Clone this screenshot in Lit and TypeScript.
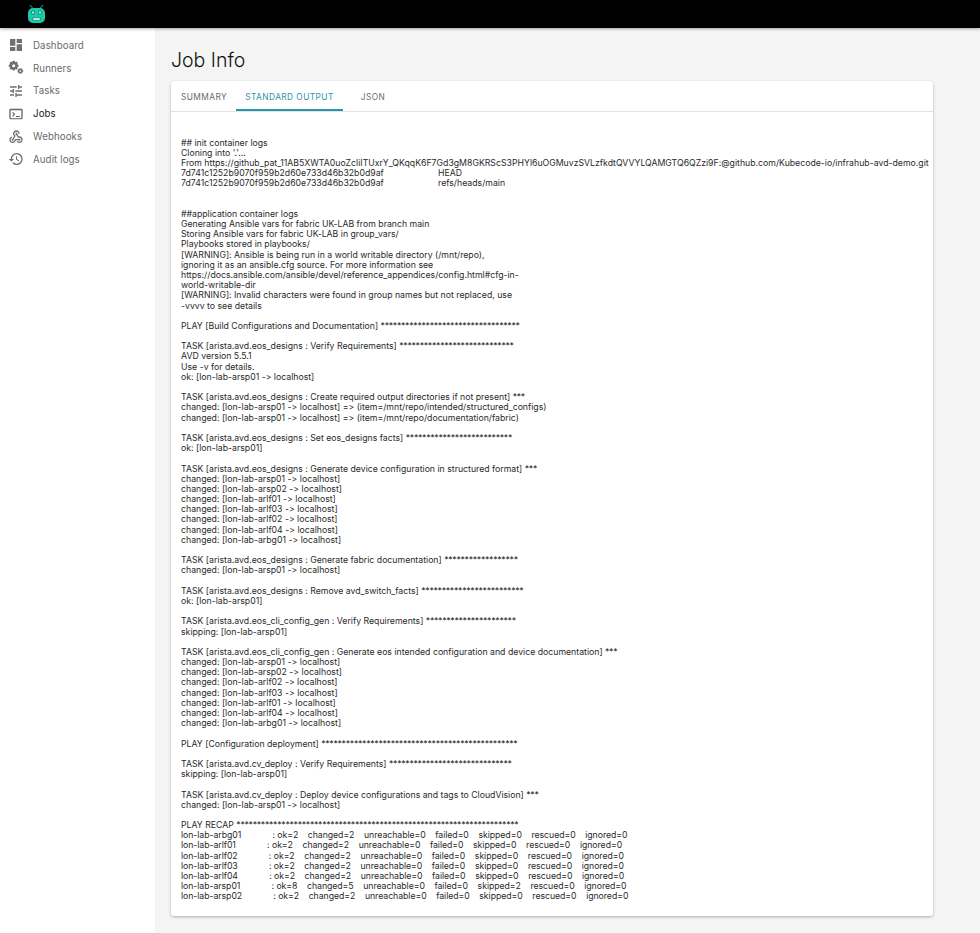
import { LitElement, html, css, svg } from "lit";
import { customElement } from "lit/decorators.js";

const LOG = `## init container logs
Cloning into '.'...
From https://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:@github.com/Kubecode-io/infrahub-avd-demo.git
7d741c1252b9070f959b2d60e733d46b32b0d9af\tHEAD
7d741c1252b9070f959b2d60e733d46b32b0d9af\trefs/heads/main


##application container logs
Generating Ansible vars for fabric UK-LAB from branch main
Storing Ansible vars for fabric UK-LAB in group_vars/
Playbooks stored in playbooks/
[WARNING]: Ansible is being run in a world writable directory (/mnt/repo),
ignoring it as an ansible.cfg source. For more information see
https://docs.ansible.com/ansible/devel/reference_appendices/config.html#cfg-in-
world-writable-dir
[WARNING]: Invalid characters were found in group names but not replaced, use
-vvvv to see details

PLAY [Build Configurations and Documentation] **********************************

TASK [arista.avd.eos_designs : Verify Requirements] ****************************
AVD version 5.5.1
Use -v for details.
ok: [lon-lab-arsp01 -> localhost]

TASK [arista.avd.eos_designs : Create required output directories if not present] ***
changed: [lon-lab-arsp01 -> localhost] => (item=/mnt/repo/intended/structured_configs)
changed: [lon-lab-arsp01 -> localhost] => (item=/mnt/repo/documentation/fabric)

TASK [arista.avd.eos_designs : Set eos_designs facts] **************************
ok: [lon-lab-arsp01]

TASK [arista.avd.eos_designs : Generate device configuration in structured format] ***
changed: [lon-lab-arsp01 -> localhost]
changed: [lon-lab-arsp02 -> localhost]
changed: [lon-lab-arlf01 -> localhost]
changed: [lon-lab-arlf03 -> localhost]
changed: [lon-lab-arlf02 -> localhost]
changed: [lon-lab-arlf04 -> localhost]
changed: [lon-lab-arbg01 -> localhost]

TASK [arista.avd.eos_designs : Generate fabric documentation] ******************
changed: [lon-lab-arsp01 -> localhost]

TASK [arista.avd.eos_designs : Remove avd_switch_facts] *************************
ok: [lon-lab-arsp01]

TASK [arista.avd.eos_cli_config_gen : Verify Requirements] **********************
skipping: [lon-lab-arsp01]

TASK [arista.avd.eos_cli_config_gen : Generate eos intended configuration and device documentation] ***
changed: [lon-lab-arsp01 -> localhost]
changed: [lon-lab-arsp02 -> localhost]
changed: [lon-lab-arlf02 -> localhost]
changed: [lon-lab-arlf03 -> localhost]
changed: [lon-lab-arlf01 -> localhost]
changed: [lon-lab-arlf04 -> localhost]
changed: [lon-lab-arbg01 -> localhost]

PLAY [Configuration deployment] ************************************************

TASK [arista.avd.cv_deploy : Verify Requirements] ******************************
skipping: [lon-lab-arsp01]

TASK [arista.avd.cv_deploy : Deploy device configurations and tags to CloudVision] ***
changed: [lon-lab-arsp01 -> localhost]

PLAY RECAP *********************************************************************
lon-lab-arbg01             : ok=2    changed=2    unreachable=0    failed=0    skipped=0    rescued=0    ignored=0
lon-lab-arlf01             : ok=2    changed=2    unreachable=0    failed=0    skipped=0    rescued=0    ignored=0
lon-lab-arlf02             : ok=2    changed=2    unreachable=0    failed=0    skipped=0    rescued=0    ignored=0
lon-lab-arlf03             : ok=2    changed=2    unreachable=0    failed=0    skipped=0    rescued=0    ignored=0
lon-lab-arlf04             : ok=2    changed=2    unreachable=0    failed=0    skipped=0    rescued=0    ignored=0
lon-lab-arsp01             : ok=8    changed=5    unreachable=0    failed=0    skipped=2    rescued=0    ignored=0
lon-lab-arsp02             : ok=2    changed=2    unreachable=0    failed=0    skipped=0    rescued=0    ignored=0`;

function gear(cx: number, cy: number, ro: number, ri: number, hole: number, teeth: number): string {
  let d = "";
  const step = (Math.PI * 2) / teeth;
  for (let i = 0; i < teeth; i++) {
    const a = i * step;
    const pts: [number, number][] = [
      [ri, a - step * 0.5],
      [ro, a - step * 0.25],
      [ro, a + step * 0.25],
      [ri, a + step * 0.5],
    ];
    pts.forEach(([r, t], j) => {
      d += `${i === 0 && j === 0 ? "M" : "L"}${(cx + r * Math.cos(t)).toFixed(2)} ${(cy + r * Math.sin(t)).toFixed(2)}`;
    });
  }
  d += `Z M${cx - hole} ${cy}a${hole} ${hole} 0 1 0 ${hole * 2} 0a${hole} ${hole} 0 1 0 ${-hole * 2} 0Z`;
  return d;
}

const NAV: [string, string, boolean][] = [
  ["Dashboard", "M3 13h8V3H3v10zm0 8h8v-6H3v6zm10 0h8V11h-8v10zm0-18v6h8V3h-8z", false],
  ["Runners", gear(8.5, 8.5, 7.5, 5.6, 2.3, 8) + gear(18.5, 16.5, 4.4, 3.2, 1.3, 6), false],
  ["Tasks", "M3 17v2h6v-2H3zM3 5v2h10V5H3zm10 16v-2h8v-2h-8v-2h-2v6h2zM7 9v2H3v2h4v2h2V9H7zm14 4v-2H11v2h10zm-6-4h2V7h4V5h-4V3h-2v6z", false],
  ["Jobs", "M20 4H4c-1.100 0-2 .9-2 2v12c0 1.100.9 2 2 2h16c1.100 0 2-.9 2-2V6c0-1.100-.9-2-2-2zm0 14.500H4V6.500h16v12zM18 16.500h-6V15h6v1.500zM7.500 16l-1.100-1.100L8.500 12.500 6.400 10.100 7.500 9l3.400 3.500L7.500 16z", true],
  ["Webhooks", "M10 15l5.880 0c.27-.31.67-.5 1.120-.5.830 0 1.500.67 1.500 1.500 0 .830-.67 1.500-1.500 1.500-.44 0-.84-.19-1.120-.5l-3.980 0c-.46 2.280-2.480 4-4.900 4-2.760 0-5-2.240-5-5 0-2.420 1.720-4.440 4-4.900l0 2.070C4.840 13.580 4 14.700 4 16c0 1.650 1.350 3 3 3s3-1.350 3-3V15zM12.500 4c1.650 0 3 1.350 3 3h2c0-2.760-2.240-5-5-5l0 0c-2.760 0-5 2.240-5 5 0 1.430.6 2.710 1.550 3.620l-2.350 3.900C6.020 14.660 5.500 15.270 5.500 16c0 .830.67 1.500 1.500 1.500s1.500-.67 1.500-1.500c0-.16-.02-.31-.07-.45l3.380-5.630C10.490 9.610 9.500 8.420 9.500 7C9.500 5.350 10.850 4 12.500 4zM17 13c-.64 0-1.230.2-1.720.54l-3.050-5.070C11.530 8.350 11 7.740 11 7c0-.83.67-1.500 1.500-1.500S14 6.170 14 7c0 .15-.02.29-.06.43l2.190 3.650C16.410 11.030 16.700 11 17 11l0 0c2.760 0 5 2.240 5 5 0 2.760-2.240 5-5 5-1.850 0-3.470-1.010-4.330-2.500l2.670 0C15.820 18.820 16.390 19 17 19c1.650 0 3-1.350 3-3S18.650 13 17 13z", false],
  ["Audit logs", "M13 3a9 9 0 0 0-9 9H1l3.890 3.890.07.14L9 12H6a7 7 0 1 1 2.050 4.950l-1.420 1.420A9 9 0 1 0 13 3zm-1 5v5l4.280 2.540.72-1.210-3.500-2.080V8H12z", false],
];

@customElement("app-root")
export class AppRoot extends LitElement {
  static styles = css`
    :host { display: block; height: 933px; background: #f5f5f5; font-family: "Inter", sans-serif; overflow: hidden; }
    .top { height: 28px; background: #000; display: flex; align-items: center; padding-left: 27px; box-shadow: 0 1px 3px rgba(0,0,0,.35); position: relative; z-index: 2; }
    .logo { width: 19px; height: 20px; display: block; }
    .main { display: flex; align-items: flex-start; }
    .side { width: 155px; height: 905px; background: #fff; flex: none; padding-top: 6px; box-sizing: border-box; }
    .nav { display: flex; align-items: center; height: 22.8px; padding-left: 8px; gap: 9px; font-size: 9.700px; color: #6a6a6a; letter-spacing: .1px; }
    .nav svg { width: 16px; height: 16px; fill: #6f6f6f; flex: none; }
    .nav.on { color: #222; }
    .nav.on svg { fill: #666; }
    .content { width: 762px; margin-left: 16px; }
    h1 { margin: 20px 0 9px; font-size: 19.500px; line-height: 24px; font-weight: 300; color: #111; }
    .card { background: #fff; height: 835px; border-radius: 3px; box-shadow: 0 1px 3px rgba(0,0,0,.3); }
    .tabs { display: flex; height: 30px; border-bottom: 1px solid #e2e2e2; font-size: 8.300px; font-weight: 400; letter-spacing: .45px; color: #6a6a6a; }
    .tab { display: flex; justify-content: center; height: 30px; box-sizing: border-box; text-transform: uppercase; padding-top: 10px; line-height: 12px; }
    .t1 { width: 65px; padding-left: 1px; }
    .t2 { width: 107px; color: #2a95a6; border-bottom: 2px solid #2a95a6; }
    .t3 { width: 59px; padding-left: 1px; }
    .log { padding: 25.500px 0 0 10px; font: 400 8.720px/10.190px "Inter", sans-serif; font-feature-settings: "calt" 0, "liga" 0; color: #2a2a2a; tab-size: 257px; }
    .line { white-space: pre; height: 10.190px; }
    .recap { letter-spacing: -.05px; }
    .stars { letter-spacing: -.28px; }
  `;
  private line(text: string) {
    const parts = text.split(/(\*{3,})/).map((p, i) => (i % 2 ? html`<span class="stars">${p}</span>` : p));
    return html`<div class="line ${text.startsWith("lon-lab") ? "recap" : ""}">${parts}</div>`;
  }
  render() {
    return html`
      <div class="top">
        <svg class="logo" viewBox="0 0 19 20">
          <path d="M3 1l3 3.500M16 1l-3 3.500" stroke="#1fc9a5" stroke-width=".9" fill="none"></path>
          <rect x="1" y="4" width="17" height="15" rx="5" fill="#1fc9a5"></rect>
          <circle cx="6" cy="8.500" r="2.200" fill="#149a85"></circle>
          <circle cx="13" cy="8.500" r="2.200" fill="#149a85"></circle>
          <circle cx="6" cy="8.500" r="1" fill="#d9fff6"></circle>
          <circle cx="13" cy="8.500" r="1" fill="#d9fff6"></circle>
          <rect x="5" y="13.500" width="9" height="3" rx="1.200" fill="#149a85"></rect>
          <rect x="6" y="14.300" width="7" height="1.400" rx=".7" fill="#e4fff9"></rect>
        </svg>
      </div>
      <div class="main">
        <nav class="side">
          ${NAV.map(([label, d, on]) => html`<div class="nav ${on ? "on" : ""}"><svg viewBox="0 0 24 24">${svg`<path fill-rule="evenodd" d=${d}></path>`}</svg><span>${label}</span></div>`)}
        </nav>
        <main class="content">
          <h1>Job Info</h1>
          <section class="card">
            <div class="tabs">
              <div class="tab t1">Summary</div>
              <div class="tab t2">Standard Output</div>
              <div class="tab t3">JSON</div>
            </div>
            <div class="log">${LOG.split("\n").map((l) => this.line(l))}</div>
          </section>
        </main>
      </div>
    `;
  }
}
